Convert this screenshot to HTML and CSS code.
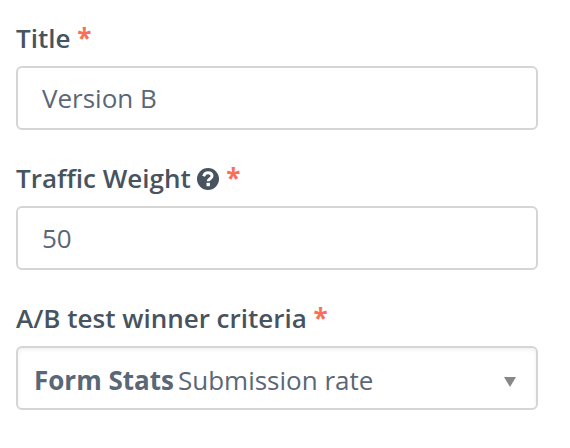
FILE: index.html
```html
<!DOCTYPE html>
<html lang="en">
<head>
    <meta charset="UTF-8">
    <meta name="viewport" content="width=device-width, initial-scale=1.0">
    <title>A/B Test Variant</title>
    <link rel="stylesheet" href="styles.css">
</head>
<body>
    <form class="variant-form">
        <div class="form-group">
            <label class="control-label" for="title">Title <span class="required">*</span></label>
            <input class="form-control" type="text" id="title" name="title" value="Version B" required>
        </div>

        <div class="form-group">
            <label class="control-label" for="weight">Traffic Weight
                <svg class="help-icon" viewBox="0 0 22 22" aria-hidden="true">
                    <circle cx="11" cy="11" r="11" fill="#47535f"/>
                    <path d="M6.6 8.2C7.4 6 9 4.8 11 4.8c2.4 0 4 1.4 4 3.3 0 2.7-3.8 2.6-3.8 5.2" fill="none" stroke="#fff" stroke-width="3"/>
                    <rect x="9.5" y="14.8" width="3.4" height="3.4" fill="#fff"/>
                </svg>
                <span class="required">*</span></label>
            <input class="form-control" type="text" inputmode="numeric" id="weight" name="weight" value="50" required>
        </div>

        <div class="form-group">
            <label class="control-label" for="criteria">A/B test winner criteria <span class="required">*</span></label>
            <div class="select-box">
                <span class="select-group">Form Stats</span>
                <select class="select-value" id="criteria" name="criteria" required>
                    <option value="form.submissions" selected>Submission rate</option>
                </select>
                <svg class="select-arrow" viewBox="0 0 12 10" aria-hidden="true">
                    <path d="M0 0h12L6 10z" fill="#888"/>
                </svg>
            </div>
        </div>
    </form>
</body>
</html>
```
FILE: styles.css
```css
* {
    box-sizing: border-box;
}
body {
    margin: 0;
    background-color: #fff;
    font-family: "Open Sans", "Noto Sans", sans-serif;
    font-size: 26px;
    color: #596777;
}
.variant-form {
    padding: 20px 32px 0 16px;
}
.form-group {
    margin-bottom: 30px;
}
.control-label {
    display: block;
    margin-bottom: 10px;
    line-height: 36px;
    font-weight: 600;
    color: #47535f;
}
.required {
    font-weight: bold;
    color: #fb6e58;
}
.help-icon {
    width: 22px;
    height: 22px;
    vertical-align: -2px;
}
.form-control,
.select-box {
    display: block;
    width: 100%;
    height: 64px;
    border: 2px solid #d5d5d5;
    border-radius: 6px;
    background-color: #fff;
}
.form-control {
    padding: 0 24px;
    font: inherit;
    color: inherit;
}
.select-box {
    display: flex;
    align-items: center;
    gap: 4px;
    padding: 4px 20px 0 16px;
    box-shadow: inset 0 2px 4px rgba(0,0,0,0.06);
}
.select-group {
    font-weight: bold;
}
.select-value {
    flex: 1;
    min-width: 0;
    padding: 0;
    border: none;
    background: none;
    appearance: none;
    font: inherit;
    color: inherit;
}
.select-arrow {
    width: 12px;
    height: 10px;
    margin-top: 4px;
}
.form-control:focus,
.select-box:focus-within {
    border-color: #9aa4b0;
    outline: none;
}
```
